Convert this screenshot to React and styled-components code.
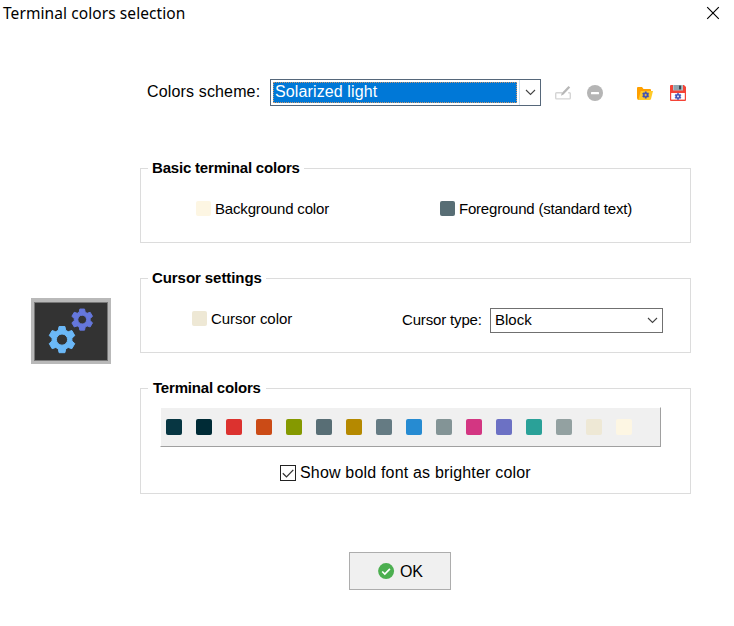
import React from "react";
import styled, { createGlobalStyle } from "styled-components";

const GlobalStyle = createGlobalStyle`
  * { box-sizing: border-box; }
  body { margin: 0; background: #fff; color: #000; font-family: "Liberation Sans", Arial, sans-serif; }
`;

const Dialog = styled.div`
  width: 734px;
  height: 626px;
  background: #fff;
  overflow: hidden;
  display: flex;
  flex-direction: column;
`;

const TitleBar = styled.header`
  height: 28px;
  flex: none;
  display: flex;
  justify-content: space-between;
  align-items: center;
  padding: 0 14px 2px 3px;
`;

const Title = styled.h1`
  margin: 0;
  font: 400 15.5px/22px "Noto Sans", "Open Sans", sans-serif;
  letter-spacing: 0.08px;
  white-space: nowrap;
`;

const CloseButton = styled.button`
  border: 0;
  background: none;
  padding: 0;
  width: 14px;
  height: 14px;
  display: flex;
`;

const Body = styled.main`
  display: grid;
  grid-template-columns: 109px 551px;
  height: 466px;
`;

const Sidebar = styled.aside`
  padding: 270px 0 0 0;
  margin-left: 31px;
  width: 80px;
`;

const Content = styled.section`
  display: flex;
  flex-direction: column;
  margin-left: 31px;
  width: 551px;
  padding-top: 51px;
`;

const SchemeRow = styled.div`
  display: flex;
  height: 27px;
  padding-left: 7px;
  margin-bottom: 62px;
`;

const Label = styled.span`
  font-size: ${(p) => p.$size || 15}px;
  line-height: ${(p) => p.$line || 15}px;
  letter-spacing: ${(p) => p.$spacing || 0}px;
  width: ${(p) => (p.$width ? `${p.$width}px` : "auto")};
  white-space: nowrap;
  flex: none;
`;

const SchemeCombo = styled.div`
  width: 271px;
  height: 27px;
  border: 1px solid #56677a;
  padding: 2px 0 2px 2px;
  display: flex;
`;

const Selected = styled.div`
  width: 244px;
  height: 21px;
  background: #0078d7;
  border: 1px dotted #c8966e;
  color: #fff;
  font-size: 16px;
  line-height: 17px;
  padding-left: 1px;
  letter-spacing: 0.12px;
`;

const DropArrow = styled.div`
  margin: -2px 0 -2px 2px;
  flex: 1;
  border-left: 1px solid #cce4f7;
  display: flex;
  align-items: center;
  justify-content: center;
`;

const IconTools = styled.div`
  display: flex;
  align-items: center;
  padding-top: 1px;
  margin-left: 14px;
`;

const ToolButton = styled.button`
  border: 0;
  background: none;
  padding: 0;
  display: flex;
  width: 16px;
  height: 16px;
  margin-right: ${(p) => p.$gap}px;
`;

const Group = styled.section`
  width: 551px;
  height: ${(p) => p.$height || 75}px;
  border: 1px solid #dcdcdc;
  margin-bottom: 35px;
  flex: none;
`;

const GroupTitle = styled.h2`
  margin: -11px 0 0 7px;
  padding: 0 4px 0 ${(p) => p.$inset || 4}px;
  width: ${(p) => p.$width}px;
  height: 20px;
  background: #fff;
  font-size: 15px;
  line-height: 19px;
  font-weight: 700;
  letter-spacing: ${(p) => p.$spacing || 0}px;
  white-space: nowrap;
`;

const GroupRow = styled.div`
  display: flex;
  padding-left: ${(p) => p.$left}px;
  padding-top: ${(p) => p.$top || 23}px;
`;

const ColorChoice = styled.div`
  display: flex;
  gap: 4px;
  width: ${(p) => p.$width}px;
`;

const Swatch = styled.i`
  display: block;
  flex: none;
  width: ${(p) => p.$size || 15}px;
  height: ${(p) => p.$size || 15}px;
  border-radius: 2px;
  background: ${(p) => p.$color};
`;

const CursorCombo = styled.div`
  width: 173px;
  height: 25px;
  margin-top: -3px;
  padding: 0 4px 0 4px;
  border: 1px solid #707070;
  display: flex;
  align-items: center;
  justify-content: space-between;
`;

const CursorValue = styled.span`
  font-size: 15px;
  line-height: 17px;
  padding-bottom: 2px;
`;

const Palette = styled.div`
  width: 501px;
  height: 40px;
  margin: 9px 0 0 19px;
  border: 1px solid #fff;
  border-right-color: #a0a0a0;
  border-bottom-color: #a0a0a0;
  background: #f0f0f0;
  display: flex;
  gap: 14px;
  padding: 11px 5px;
`;

const CheckRow = styled.label`
  display: flex;
  align-items: center;
  gap: 4px;
  margin: 17px 0 0 139px;
  height: 18px;
`;

const CheckBox = styled.span`
  width: 16px;
  height: 16px;
  border: 1px solid #222;
  display: flex;
`;

const Footer = styled.footer`
  padding: 58px 0 0 349px;
`;

const OkButton = styled.button`
  width: 102px;
  height: 38px;
  border: 1px solid #adadad;
  background: #f0f0f0;
  padding: 0 0 0 28px;
  display: flex;
  align-items: center;
  gap: 5px;
  color: #000;
`;

const OkText = styled.span`
  font: 16px/18px "Liberation Sans", Arial, sans-serif;
  letter-spacing: -0.3px;
  padding-top: 2px;
`;

const Preview = styled.svg`
  display: block;
`;

// Six-toothed gear outline: r is the body radius, R the tooth radius.
function gearPath(cx, cy, r, R, hole) {
  const pts = [];
  for (let i = 0; i < 6; i++) {
    const a = (i * Math.PI) / 3 - Math.PI / 2;
    [[-0.38, r], [-0.22, R], [0.22, R], [0.38, r]].forEach(([d, k]) =>
      pts.push(`${(cx + k * Math.cos(a + d)).toFixed(2)} ${(cy + k * Math.sin(a + d)).toFixed(2)}`)
    );
  }
  return `M${pts.join("L")}ZM${cx - hole} ${cy}a${hole} ${hole} 0 1 0 ${2 * hole} 0a${hole} ${hole} 0 1 0 ${-2 * hole} 0Z`;
}

const Gear = ({ cx, cy, r, R, hole, color, join = 1 }) => (
  <path d={gearPath(cx, cy, r, R, hole)} fill={color} stroke={color} strokeWidth={join} strokeLinejoin="round" fillRule="evenodd" />
);

const Chevron = ({ color = "#444" }) => (
  <svg width="11" height="7" viewBox="0 0 11 7">
    <path d="M1 1l4.5 4.5L10 1" fill="none" stroke={color} strokeWidth="1.1" />
  </svg>
);

const palette = [
  "#073642", "#002b36", "#dc322f", "#cb4b16", "#859900", "#586e75", "#b58900", "#657b83",
  "#268bd2", "#839496", "#d33682", "#6c71c4", "#2aa198", "#93a1a1", "#eee8d5", "#fdf6e3",
];

export default function App() {
  return (
    <>
      <GlobalStyle />
      <Dialog>
        <TitleBar>
          <Title>Terminal colors selection</Title>
          <CloseButton aria-label="Close">
            <svg width="14" height="14" viewBox="0 0 14 14">
              <path d="M1.2 1.2l11.6 11.6M12.8 1.2L1.2 12.8" stroke="#000" strokeWidth="1.15" />
            </svg>
          </CloseButton>
        </TitleBar>
        <Body>
          <Sidebar>
            <Preview width="80" height="66" viewBox="0 0 80 66">
              <rect width="80" height="66" fill="#b9b9b9" />
              <rect x="3" y="4" width="74" height="59" fill="#777" />
              <rect x="4" y="5" width="72" height="57" fill="#333" />
              <Gear cx={51.2} cy={21.6} r={8} R={10.8} hole={4.4} color="#6577dc" />
              <Gear cx={31} cy={41.6} r={10} R={13.4} hole={5.6} color="#6bb8f7" />
            </Preview>
          </Sidebar>
          <Content>
            <SchemeRow>
              <Label $size={16} $line={25} $spacing={0.15} $width={123}>Colors scheme:</Label>
              <SchemeCombo>
                <Selected>Solarized light</Selected>
                <DropArrow><Chevron /></DropArrow>
              </SchemeCombo>
              <IconTools>
                <ToolButton $gap={16} aria-label="Edit scheme">
                  <svg width="16" height="16" viewBox="0 0 16 16">
                    <path d="M7 7.7H1.6Q.7 7.7.7 8.6V13q0 .9.9.9h12.8q.9 0 .9-.9V8.6q0-.9-.9-.9h-1.2" fill="none" stroke="#d5d5d5" strokeWidth="1.4" />
                    <path d="M6 10.7l.8-2.8L13.5.9l1.7 1.6-6.7 7z" fill="#b7b7b7" />
                  </svg>
                </ToolButton>
                <ToolButton $gap={34} aria-label="Delete scheme">
                  <svg width="16" height="16" viewBox="0 0 16 16">
                    <circle cx="8" cy="8" r="8" fill="#b5b5b5" />
                    <rect x="4" y="7" width="8" height="2.2" rx="0.5" fill="#fff" />
                  </svg>
                </ToolButton>
                <ToolButton $gap={17} aria-label="Open scheme">
                  <svg width="16" height="16" viewBox="0 0 16 16">
                    <path d="M0 13V3q0-1 1-1h4l1.5 2H13q1 0 1 1v2L12 15H2q-2 0-2-2z" fill="#ffa000" />
                    <path d="M3.8 6H16l-2 8q-.4 1-1.4 1H1.4z" fill="#ffca28" />
                    <Gear cx={8.7} cy={10} r={2.4} R={3.4} hole={1.2} color="#3f51b5" join={0.4} />
                  </svg>
                </ToolButton>
                <ToolButton $gap={0} aria-label="Save scheme">
                  <svg width="16" height="16" viewBox="0 0 16 16">
                    <path d="M0 1q0-1 1-1h13l2 2v13q0 1-1 1H1q-1 0-1-1z" fill="#f44336" />
                    <path d="M3 0h10v5.5H3z" fill="#b0bec5" />
                    <path d="M4 0h5v5H4z" fill="#90a4ae" />
                    <path d="M9 .5h2.2v4H9z" fill="#37474f" />
                    <path d="M1.2 8h13.6v6.6H1.2z" fill="#fff" />
                    <Gear cx={8} cy={11.4} r={2.3} R={3.2} hole={1.1} color="#3f51b5" join={0.4} />
                  </svg>
                </ToolButton>
              </IconTools>
            </SchemeRow>

            <Group>
              <GroupTitle $width={156} $spacing={-0.19}>Basic terminal colors</GroupTitle>
              <GroupRow $left={55}>
                <ColorChoice $width={244}>
                  <Swatch $color="#fdf6e3" />
                  <Label $spacing={-0.17}>Background color</Label>
                </ColorChoice>
                <ColorChoice $width={200}>
                  <Swatch $color="#586e75" />
                  <Label $spacing={-0.21}>Foreground (standard text)</Label>
                </ColorChoice>
              </GroupRow>
            </Group>

            <Group>
              <GroupTitle $width={118} $spacing={-0.07}>Cursor settings</GroupTitle>
              <GroupRow $left={51}>
                <ColorChoice $width={210}>
                  <Swatch $color="#eee8d5" />
                  <Label $spacing={-0.04}>Cursor color</Label>
                </ColorChoice>
                <Label $line={17} $width={88} $spacing={-0.16}>Cursor type:</Label>
                <CursorCombo>
                  <CursorValue>Block</CursorValue>
                  <Chevron />
                </CursorCombo>
              </GroupRow>
            </Group>

            <Group $height={106}>
              <GroupTitle $width={118} $inset={5} $spacing={-0.19}>Terminal colors</GroupTitle>
              <Palette>
                {palette.map((c) => <Swatch key={c} $size={16} $color={c} />)}
              </Palette>
              <CheckRow>
                <CheckBox>
                  <svg width="14" height="14" viewBox="0 0 14 14">
                    <path d="M1.8 7.2l3.7 3.7 6.8-7" fill="none" stroke="#333" strokeWidth="1.3" />
                  </svg>
                </CheckBox>
                <Label $size={16} $line={18} $spacing={0.18}>Show bold font as brighter color</Label>
              </CheckRow>
            </Group>
          </Content>
        </Body>
        <Footer>
          <OkButton>
            <svg width="17" height="17" viewBox="0 0 17 17">
              <circle cx="8.1" cy="8.1" r="8" fill="#4caf50" />
              <path d="M4.2 8.5l2.6 2.5 5.1-5.1" fill="none" stroke="#fff" strokeWidth="1.7" />
            </svg>
            <OkText>OK</OkText>
          </OkButton>
        </Footer>
      </Dialog>
    </>
  );
}
